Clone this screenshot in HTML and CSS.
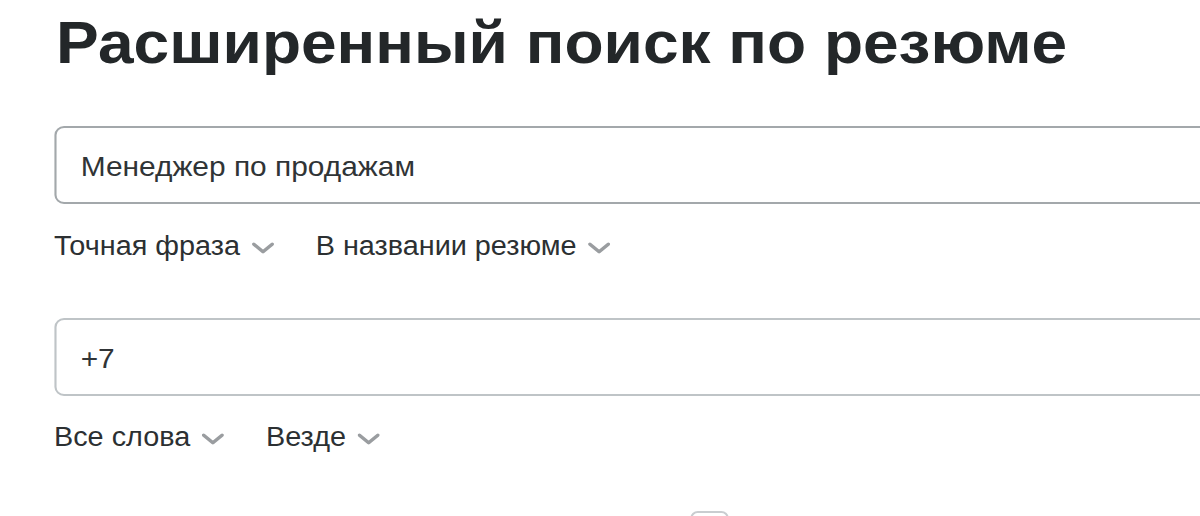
FILE: index.html
```html
<!DOCTYPE html>
<html lang="ru">
<head>
<meta charset="utf-8">
<title>Расширенный поиск по резюме</title>
<link rel="stylesheet" href="styles.css">
</head>
<body>
<main class="page">
  <h1 class="title">Расширенный поиск по резюме</h1>

  <div class="field field-first">
    <input class="text-input" type="text" value="Менеджер по продажам">
  </div>
  <div class="options options-first">
    <button class="select">Точная фраза <svg class="chev" viewBox="0 0 22 12"><path d="M2 2 L11 10 L20 2"/></svg></button>
    <button class="select">В названии резюме <svg class="chev" viewBox="0 0 22 12"><path d="M2 2 L11 10 L20 2"/></svg></button>
  </div>

  <div class="field field-second">
    <input class="text-input light" type="text" value="+7">
  </div>
  <div class="options options-second">
    <button class="select">Все слова <svg class="chev" viewBox="0 0 22 12"><path d="M2 2 L11 10 L20 2"/></svg></button>
    <button class="select">Везде <svg class="chev" viewBox="0 0 22 12"><path d="M2 2 L11 10 L20 2"/></svg></button>
  </div>

  <div class="check-row">
    <span class="checkbox"></span>
  </div>
</main>
</body>
</html>
```

FILE: styles.css
```css
html, body {
  margin: 0;
  padding: 0;
  background: #ffffff;
  overflow: hidden;
}
body {
  width: 1200px;
  height: 516px;
  font-family: "Liberation Sans", Arial, sans-serif;
  color: #232729;
}
.page {
  padding-left: 50.6px;
  transform: scaleX(1.067);
  transform-origin: 0 0;
}
.title {
  margin: 7px 0 0 2px;
  font-size: 60px;
  line-height: 72px;
  font-weight: 700;
  color: #232729;
  white-space: nowrap;
}
.field {
  width: 1200px;
}
.field-first {
  margin-top: 47px;
}
.field-second {
  margin-top: 57px;
}
.text-input {
  box-sizing: border-box;
  display: block;
  width: 100%;
  height: 78px;
  margin: 0;
  padding: 3px 0 0 23px;
  border: 2px solid #a3a8ab;
  border-radius: 9px;
  background: #ffffff;
  font-family: "Liberation Sans", Arial, sans-serif;
  font-size: 28px;
  color: #303436;
  outline: none;
}
.text-input.light {
  border-color: #bfc4c7;
}
.options {
  display: flex;
  gap: 39px;
  height: 30px;
  align-items: center;
}
.options-first {
  margin-top: 27px;
}
.options-second {
  margin-top: 26px;
}
.select {
  display: flex;
  align-items: center;
  gap: 11px;
  margin: 0;
  padding: 0;
  border: none;
  background: none;
  font-family: "Liberation Sans", Arial, sans-serif;
  font-size: 27px;
  line-height: 30px;
  color: #2c3032;
  cursor: pointer;
}
.chev {
  width: 21px;
  height: 12px;
  margin-top: 3px;
}
.chev path {
  fill: none;
  stroke: #9a9da0;
  stroke-width: 3.4;
  stroke-linecap: round;
  stroke-linejoin: round;
}
.check-row {
  margin-top: 59px;
  padding-left: 596px;
}
.checkbox {
  display: block;
  width: 36px;
  height: 36px;
  box-sizing: border-box;
  border: 2px solid #c9cdd0;
  border-radius: 7px;
}
```
